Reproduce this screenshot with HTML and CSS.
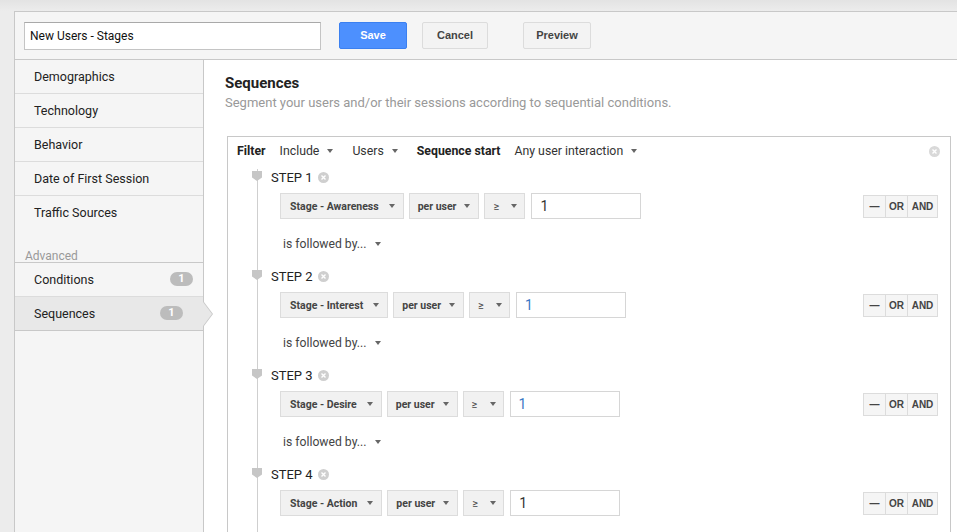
FILE: index.html
```html
<!DOCTYPE html>
<html lang="en">
<head>
    <meta charset="UTF-8">
    <title>New Users - Stages</title>
    <link rel="stylesheet" href="styles.css">
</head>
<body>
    <div class="topbar"></div>
    <div class="frame">
        <div class="header">
            <div class="name">New Users - Stages</div>
            <button class="btn btn-save">Save</button>
            <button class="btn btn-cancel">Cancel</button>
            <button class="btn btn-preview">Preview</button>
        </div>
        <div class="main">
            <ul class="side">
                <li class="nav">Demographics</li>
                <li class="nav">Technology</li>
                <li class="nav">Behavior</li>
                <li class="nav">Date of First Session</li>
                <li class="nav last">Traffic Sources</li>
                <li class="label">Advanced</li>
                <li class="nav">Conditions <span class="badge">1</span></li>
                <li class="nav selected">Sequences <span class="badge">1</span></li>
            </ul>
            <div class="content">
                <h2 class="title">Sequences</h2>
                <p class="sub">Segment your users and/or their sessions according to sequential conditions.</p>
                <div class="box">
                    <div class="filter">
                        <b>Filter</b>
                        <span class="pick">Include <i class="caret"></i></span>
                        <span class="pick">Users <i class="caret"></i></span>
                        <b>Sequence start</b>
                        <span class="pick">Any user interaction <i class="caret"></i></span>
                        <span class="x big"><svg width="11" height="11" viewBox="0 0 11 11"><circle cx="5.5" cy="5.5" r="5.5" fill="#d9d9d9"/><path d="M3.5 3.5l4 4M7.5 3.5l-4 4" stroke="#fff" stroke-width="1.4"/></svg></span>
                    </div>
                    <div class="steps">
                        <div class="step">
                            <div class="step-head"><i class="marker"></i>STEP 1 <span class="x"><svg width="11" height="11" viewBox="0 0 11 11"><circle cx="5.5" cy="5.5" r="5.5" fill="#cfcfcf"/><path d="M3.5 3.5l4 4M7.5 3.5l-4 4" stroke="#fff" stroke-width="1.4"/></svg></span></div>
                            <div class="cond">
                                <span class="dd dd-stage">Stage - Awareness <i class="caret"></i></span>
                                <span class="dd dd-per">per user <i class="caret"></i></span>
                                <span class="dd dd-op">&ge; <i class="caret"></i></span>
                                <span class="val">1</span>
                                <span class="ops"><span class="op">&mdash;</span><span class="op">OR</span><span class="op">AND</span></span>
                            </div>
                            <div class="follow">is followed by... <i class="caret"></i></div>
                        </div>
                        <div class="step">
                            <div class="step-head"><i class="marker"></i>STEP 2 <span class="x"><svg width="11" height="11" viewBox="0 0 11 11"><circle cx="5.5" cy="5.5" r="5.5" fill="#cfcfcf"/><path d="M3.5 3.5l4 4M7.5 3.5l-4 4" stroke="#fff" stroke-width="1.4"/></svg></span></div>
                            <div class="cond">
                                <span class="dd dd-stage">Stage - Interest <i class="caret"></i></span>
                                <span class="dd dd-per">per user <i class="caret"></i></span>
                                <span class="dd dd-op">&ge; <i class="caret"></i></span>
                                <span class="val blue">1</span>
                                <span class="ops"><span class="op">&mdash;</span><span class="op">OR</span><span class="op">AND</span></span>
                            </div>
                            <div class="follow">is followed by... <i class="caret"></i></div>
                        </div>
                        <div class="step">
                            <div class="step-head"><i class="marker"></i>STEP 3 <span class="x"><svg width="11" height="11" viewBox="0 0 11 11"><circle cx="5.5" cy="5.5" r="5.5" fill="#cfcfcf"/><path d="M3.5 3.5l4 4M7.5 3.5l-4 4" stroke="#fff" stroke-width="1.4"/></svg></span></div>
                            <div class="cond">
                                <span class="dd dd-stage">Stage - Desire <i class="caret"></i></span>
                                <span class="dd dd-per">per user <i class="caret"></i></span>
                                <span class="dd dd-op">&ge; <i class="caret"></i></span>
                                <span class="val blue">1</span>
                                <span class="ops"><span class="op">&mdash;</span><span class="op">OR</span><span class="op">AND</span></span>
                            </div>
                            <div class="follow">is followed by... <i class="caret"></i></div>
                        </div>
                        <div class="step">
                            <div class="step-head"><i class="marker"></i>STEP 4 <span class="x"><svg width="11" height="11" viewBox="0 0 11 11"><circle cx="5.5" cy="5.5" r="5.5" fill="#cfcfcf"/><path d="M3.5 3.5l4 4M7.5 3.5l-4 4" stroke="#fff" stroke-width="1.4"/></svg></span></div>
                            <div class="cond">
                                <span class="dd dd-stage">Stage - Action <i class="caret"></i></span>
                                <span class="dd dd-per">per user <i class="caret"></i></span>
                                <span class="dd dd-op">&ge; <i class="caret"></i></span>
                                <span class="val">1</span>
                                <span class="ops"><span class="op">&mdash;</span><span class="op">OR</span><span class="op">AND</span></span>
                            </div>
                        </div>
                    </div>
                </div>
            </div>
        </div>
    </div>
</body>
</html>
```

FILE: styles.css
```css
*{margin:0;padding:0;box-sizing:border-box;}
li{list-style:none;}
body{
    background:#ececec;
    font-family:Roboto,"Liberation Sans",Arial,sans-serif;
    color:#222;
    overflow:hidden;
    height:532px;
}
.topbar{
    height:11px;
    background:linear-gradient(#e3e3e3,#ececec);
}
.frame{
    margin-left:14px;
    border-top:1px solid #c8c8c8;
    border-left:1px solid #c8c8c8;
    background:#fff;
}
.header{
    height:48px;
    background:#f5f5f5;
    border-bottom:1px solid #c8c8c8;
    display:flex;
    align-items:center;
    padding-left:9px;
}
.name{
    width:297px;
    height:28px;
    border:1px solid #c4c4c4;
    border-top-color:#a9a9a9;
    background:#fff;
    font-size:12px;
    line-height:26px;
    padding-left:5px;
    color:#111;
}
.btn{
    height:27px;
    border-radius:2px;
    font-family:"Liberation Sans",Arial,sans-serif;
    font-weight:bold;
    font-size:11px;
    color:#444;
    background:#f3f3f3;
    border:1px solid #dcdcdc;
    padding-bottom:2px;
}
.btn-save{
    width:68px;
    margin-left:18px;
    background:#4d90fe;
    border-color:#3b80f0;
    color:#fff;
}
.btn-cancel{width:66px;margin-left:15px;}
.btn-preview{width:68px;margin-left:35px;}

.main{
    display:flex;
    height:472px;
}
.side{
    width:189px;
    flex:none;
    background:#f5f5f5;
    border-right:1px solid #c8c8c8;
}
.nav{
    height:34px;
    border-bottom:1px solid #dcdcdc;
    font-size:12.5px;
    line-height:31px;
    padding:0 10px 1px 19px;
    display:flex;
    justify-content:space-between;
    align-items:center;
    position:relative;
}
.nav.last{border-bottom:none;height:33px;}
.label{
    height:34px;
    border-bottom:1px solid #c8c8c8;
    font-size:12px;
    color:#999;
    padding-left:10px;
    padding-top:20px;
    line-height:14px;
}
.badge{
    width:23px;
    height:14px;
    border-radius:7px;
    background:#bcbcbc;
    color:#fff;
    font-size:11px;
    font-weight:bold;
    line-height:14px;
    text-align:center;
}
.selected{
    background:#e8e8e8;
    border-bottom-color:#c8c8c8;
    padding-right:20px;
}
.selected::before,.selected::after{
    content:"";
    position:absolute;
    top:5px;
    border-top:12px solid transparent;
    border-bottom:12px solid transparent;
}
.selected::before{
    left:calc(100% + 1px);
    border-left:9px solid #c8c8c8;
}
.selected::after{
    left:100%;
    border-left:9px solid #e8e8e8;
}

.content{
    flex:1;
    padding:14px 6px 0 21px;
}
.title{
    font-size:15px;
    font-weight:bold;
    line-height:18px;
    color:#222;
}
.sub{
    font-size:13px;
    color:#999;
    margin-top:2px;
    line-height:18px;
}
.box{
    margin:24px 0 0 2px;
    border:1px solid #c8c8c8;
    border-bottom:none;
    height:400px;
    padding-right:12px;
}
.filter{
    display:flex;
    align-items:center;
    height:26px;
    margin-top:1px;
    padding-left:9px;
    font-size:12.3px;
}
.filter b{margin-right:14px;}
.pick{
    display:flex;
    align-items:center;
    margin-right:19px;
    color:#333;
}
.pick .caret{margin-left:8px;}
.x{display:inline-flex;margin-left:5px;}
.x.big{margin-left:auto;margin-right:-2px;}
.caret{
    display:inline-block;
    width:0;
    height:0;
    border-left:3.5px solid transparent;
    border-right:3.5px solid transparent;
    border-top:4px solid #666;
}
.steps{
    margin-left:29px;
    margin-top:5px;
    border-left:1px solid #cfcfcf;
    height:400px;
}
.step{position:relative;}
.step + .step{margin-top:16px;}
.step-head{
    height:16px;
    display:flex;
    align-items:center;
    padding-left:13px;
    font-size:13px;
    color:#222;
}
.marker{
    position:absolute;
    left:-6px;
    top:2px;
    width:10px;
    height:10px;
    background:#c6c6c6;
    clip-path:polygon(0 0,100% 0,100% 65%,50% 100%,0 65%);
}
.cond{
    display:flex;
    align-items:center;
    margin:8px 0 0 22px;
    height:26px;
}
.dd{
    height:26px;
    border:1px solid #dcdcdc;
    background:#f1f1f1;
    display:flex;
    align-items:center;
    padding:0 8px 0 9px;
    margin-right:5px;
    font-weight:bold;
    font-size:10.5px;
    color:#444;
}
.dd-stage .caret{margin-left:10px;}
.dd-per{padding-left:8px;}
.dd-per .caret{margin-left:8px;}
.dd-op{
    width:41px;
    justify-content:space-between;
    padding:0 7px 0 8px;
    font-weight:normal;
    font-size:11px;
}
.val{
    width:110px;
    height:26px;
    border:1px solid #d6d6d6;
    background:#fff;
    font-size:14px;
    line-height:24px;
    padding-left:8px;
    color:#333;
    margin-left:1px;
}
.val.blue{color:#3b78c4;}
.ops{
    margin-left:auto;
    display:flex;
    height:23px;
}
.op{
    border:1px solid #dcdcdc;
    background:#f5f5f5;
    font-family:"Liberation Sans",Arial,sans-serif;
    font-weight:bold;
    font-size:10px;
    color:#444;
    line-height:21px;
    text-align:center;
    width:23px;
}
.op + .op{border-left:none;}
.op:nth-child(2){width:22px;}
.op:nth-child(3){width:30px;}
.follow{
    display:flex;
    align-items:center;
    height:16px;
    margin:17px 0 0 25px;
    font-size:12.2px;
    color:#444;
}
.follow .caret{margin-left:9px;}
```
